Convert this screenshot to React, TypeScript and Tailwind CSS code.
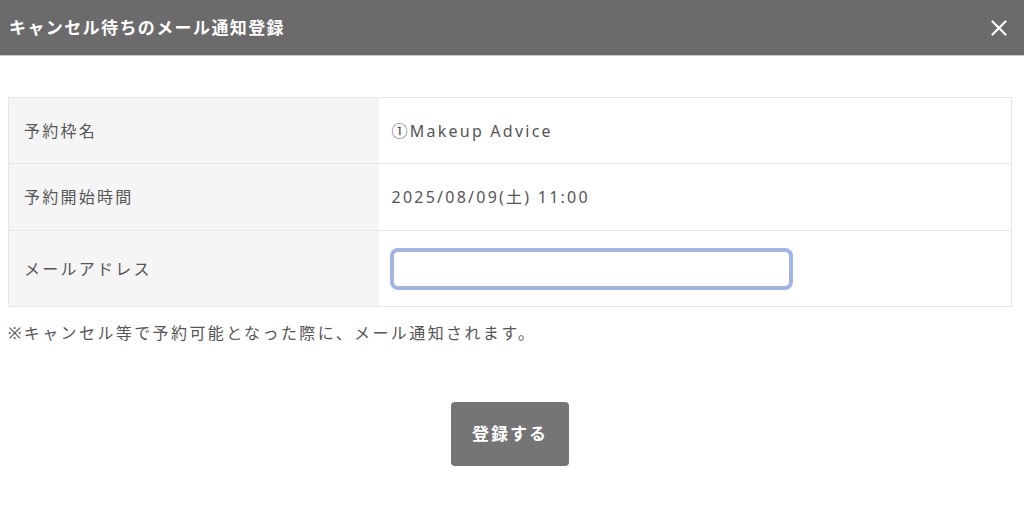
import { X } from "lucide-react";

const rows = [
  { label: "予約枠名", value: "①Makeup Advice", height: "h-[66px]" },
  { label: "予約開始時間", value: "2025/08/09(土) 11:00", height: "h-[67px]" },
];

export default function App() {
  return (
    <div
      className="min-h-[513px] w-full bg-white text-[#555]"
      style={{ fontFamily: '"Noto Sans", "Noto Sans CJK JP", sans-serif' }}
    >
      <header className="flex h-[56px] items-center justify-between border-b border-[#c8c8c8] bg-[#6b6b6b] pl-[9px] pr-[12px]">
        <h1 className="text-[17px] font-bold tracking-[1.4px] text-white">
          キャンセル待ちのメール通知登録
        </h1>
        <X className="h-[26px] w-[26px] text-white" strokeWidth={2} />
      </header>

      <div className="px-[8px] pt-[41px]">
        <table className="w-[1004px] border-collapse border border-[#e6e6e6] text-[16px] tracking-[0.14em]">
          <tbody>
            {rows.map((row) => (
              <tr key={row.label} className={`${row.height} border-b border-[#e6e6e6]`}>
                <th className="w-[370px] bg-[#f4f5f4] pl-[15px] text-left font-normal">
                  {row.label}
                </th>
                <td className="pl-[13px]">{row.value}</td>
              </tr>
            ))}
            <tr className="h-[76px]">
              <th className="w-[370px] bg-[#f4f5f4] pl-[15px] text-left font-normal">
                メールアドレス
              </th>
              <td className="pl-[14px]">
                <input
                  type="email"
                  className="block h-[36px] w-[397px] rounded-[5px] border border-[#b5b5b5] bg-white outline-none ring-[3px] ring-[#9bb5f0]"
                />
              </td>
            </tr>
          </tbody>
        </table>

        <p className="mt-[14px] text-[16px] leading-6 tracking-[0.15em]">
          ※キャンセル等で予約可能となった際に、メール通知されます。
        </p>

        <div className="mt-[57px] flex justify-center">
          <button className="mr-[4px] h-[64px] w-[118px] rounded-[4px] bg-[#757575] text-[17px] font-bold tracking-[2px] text-white">
            登録する
          </button>
        </div>
      </div>
    </div>
  );
}
